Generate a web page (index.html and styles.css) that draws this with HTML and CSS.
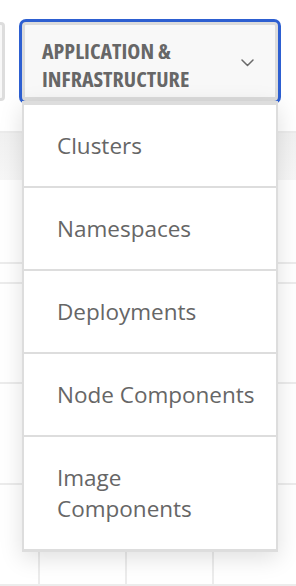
FILE: index.html
```html
<!DOCTYPE html>
<html lang="en">
<head>
<meta charset="utf-8">
<title>Dropdown</title>
<link rel="stylesheet" href="styles.css">
</head>
<body>
<div class="page">
  <div class="toolbar">
    <div class="side-btn"></div>
    <div class="select">
      <button class="select-btn" type="button">
        <span class="select-label">Application &amp; Infrastructure</span>
        <svg class="chevron" width="13" height="8" viewBox="0 0 13 8" aria-hidden="true">
          <path d="M1 1 L6.5 6.5 L12 1" fill="none" stroke="#6a6a6a" stroke-width="1.5" stroke-linecap="round" stroke-linejoin="round"/>
        </svg>
      </button>
      <ul class="menu">
        <li class="menu-item">Clusters</li>
        <li class="menu-item">Namespaces</li>
        <li class="menu-item">Deployments</li>
        <li class="menu-item">Node Components</li>
        <li class="menu-item">Image Components</li>
      </ul>
    </div>
  </div>
  <div class="table">
    <div class="row row-head"></div>
    <div class="row row-a"></div>
    <div class="row row-b"></div>
    <div class="row row-c"></div>
    <div class="row row-d"></div>
    <div class="row row-e">
      <div class="cell cell-first"></div>
      <div class="cell"></div>
      <div class="cell"></div>
      <div class="cell"></div>
    </div>
  </div>
</div>
</body>
</html>
```
FILE: styles.css
```css
* { box-sizing: border-box; }
html, body { margin: 0; padding: 0; background: #ffffff; }
body { font-family: "Open Sans", "Liberation Sans", sans-serif; overflow: hidden; }

.page { width: 296px; height: 586px; overflow: hidden; position: relative; }

.toolbar {
  display: flex;
  gap: 17px;
  height: 131px;
  padding-top: 22px;
}

.side-btn {
  width: 60px;
  height: 79px;
  margin-left: -55px;
  border: 3px solid #dddddd;
  border-radius: 4px;
  background: #f8f8f8;
  flex: none;
}

.select {
  position: relative;
  width: 256px;
  flex: none;
  z-index: 2;
}

.select-btn {
  display: flex;
  align-items: center;
  justify-content: space-between;
  width: 256px;
  height: 79px;
  margin: 0;
  padding: 5px 21px 0 17px;
  border: 3px solid #dcdcdc;
  border-bottom-width: 4px;
  border-radius: 4px;
  background: #f8f8f8;
  box-shadow: 0 0 0 3px #2d5fd1;
  text-align: left;
  cursor: pointer;
}

.select-label {
  font-family: "Open Sans", "Liberation Sans Narrow", sans-serif;
  font-stretch: 75%;
  font-weight: 700;
  font-size: 22px;
  line-height: 28px;
  color: #676767;
  text-transform: uppercase;
  width: 170px;
}

.chevron { flex: none; display: block; margin-top: -2px; }

.menu {
  position: absolute;
  top: 79px;
  left: 0;
  width: 256px;
  margin: 0;
  padding: 0;
  list-style: none;
  background: #ffffff;
  border: 2px solid #dddddd;
  border-top-width: 4px;
  border-bottom-width: 3px;
  box-shadow: 0 6px 22px rgba(0, 0, 0, 0.13);
  z-index: 3;
}

.menu-item {
  padding: 25px 20px 25px 33px;
  font-size: 22.5px;
  line-height: 31px;
  color: #666666;
  border-top: 2px solid #dddddd;
}
.menu-item:first-child { border-top: none; }

.table { display: flex; flex-direction: column; }

.row { border-top: 2px solid #ececec; }
.row-head {
  height: 49px;
  background: linear-gradient(#f1f1f1, #f7f7f7);
}
.row-a { height: 82px; border-top: none; }
.row-b { height: 20px; }
.row-c { height: 100px; }
.row-d { height: 101px; }
.row-e {
  height: 103px;
  display: grid;
  grid-template-columns: 38px 87px 87px 1fr;
  border-bottom: 2px solid #ececec;
}
.cell { border-left: 2px solid #ececec; }
.cell-first { border-left: none; }
```
